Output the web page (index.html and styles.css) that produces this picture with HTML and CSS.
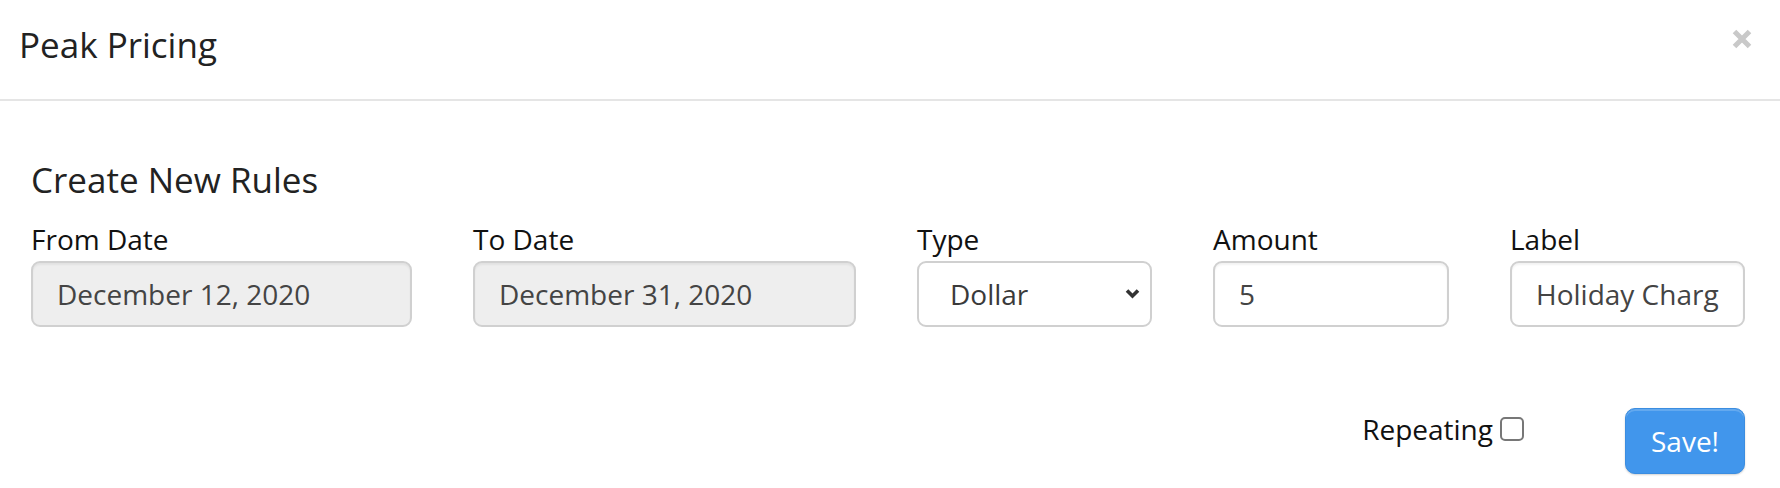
FILE: index.html
```html
<!DOCTYPE html>
<html lang="en">
<head>
<meta charset="utf-8">
<title>Peak Pricing</title>
<link rel="stylesheet" href="styles.css">
</head>
<body>
<div class="modal">
  <div class="modal-header">
    <h3 class="modal-title">Peak Pricing</h3>
    <button class="close" type="button" aria-label="Close">
      <svg width="20" height="20" viewBox="0 0 20 20"><path d="M2.5 2.5 L17.5 17.5 M17.5 2.5 L2.5 17.5" stroke="#c9c9c9" stroke-width="5" fill="none"/></svg>
    </button>
  </div>
  <div class="modal-body">
    <h4 class="section-title">Create New Rules</h4>
    <div class="form-row">
      <div class="field">
        <label class="field-label">From Date</label>
        <input class="control control-readonly" type="text" value="December 12, 2020" readonly>
      </div>
      <div class="field">
        <label class="field-label">To Date</label>
        <input class="control control-readonly" type="text" value="December 31, 2020" readonly>
      </div>
      <div class="field">
        <label class="field-label">Type</label>
        <div class="select-wrap">
          <select class="control control-select">
            <option>Dollar</option>
            <option>Percent</option>
          </select>
          <svg class="chevron" width="15" height="11" viewBox="0 0 15 11"><path d="M2 2.5 L7.5 8 L13 2.5" stroke="#333" stroke-width="3.6" fill="none"/></svg>
        </div>
      </div>
      <div class="field">
        <label class="field-label">Amount</label>
        <input class="control" type="text" value="5">
      </div>
      <div class="field">
        <label class="field-label">Label</label>
        <input class="control" type="text" value="Holiday Charge">
      </div>
    </div>
    <div class="form-footer">
      <label class="repeat">Repeating <input class="checkbox" type="checkbox"></label>
      <button class="btn-save" type="button">Save!</button>
    </div>
  </div>
</div>
</body>
</html>
```
FILE: styles.css
```css
html, body {
  margin: 0;
  padding: 0;
  background: #ffffff;
}
body {
  font-family: "Open Sans", "Liberation Sans", sans-serif;
  color: #222;
  width: 1780px;
  height: 488px;
  overflow: hidden;
}
.modal-header {
  box-sizing: border-box;
  height: 101px;
  padding: 21px 28px 0 19px;
  border-bottom: 2px solid #e5e5e5;
  display: flex;
  justify-content: space-between;
  align-items: flex-start;
}
.modal-title {
  margin: 0;
  font-size: 35px;
  font-weight: 400;
  line-height: 48px;
  color: #222;
}
.close {
  margin-top: 8px;
  padding: 0;
  border: 0;
  background: transparent;
  width: 20px;
  height: 20px;
  display: block;
}
.close svg { display: block; }
.modal-body {
  padding: 59px 35px 0 31px;
}
.section-title {
  margin: 0;
  font-size: 35px;
  font-weight: 400;
  line-height: 40px;
  color: #222;
}
.form-row {
  margin-top: 19px;
  display: grid;
  grid-template-columns: 381fr 383fr 235fr 236fr 235fr;
  column-gap: 61px;
}
.field {
  min-width: 0;
}
.field-label {
  display: block;
  font-size: 28px;
  line-height: 40px;
  margin-bottom: 2px;
  color: #111;
}
.control {
  box-sizing: border-box;
  display: block;
  width: 100%;
  height: 66px;
  margin: 0;
  padding: 0 24px;
  font-family: "Open Sans", "Liberation Sans", sans-serif;
  font-size: 28px;
  color: #444;
  background: #fff;
  border: 2px solid #d0d0d0;
  border-radius: 9px;
  box-shadow: inset 0 2px 2px rgba(0,0,0,0.05);
  outline: none;
}
.control-readonly {
  background: #eeeeee;
}
.select-wrap {
  position: relative;
}
.control-select {
  -webkit-appearance: none;
  appearance: none;
  padding-left: 31px;
  color: #3a3a3a;
  box-shadow: none;
}
.chevron {
  position: absolute;
  right: 12px;
  top: 27px;
  pointer-events: none;
}
.form-footer {
  margin-top: 81px;
  display: flex;
  justify-content: flex-end;
  align-items: flex-start;
}
.repeat {
  display: flex;
  align-items: flex-start;
  gap: 7px;
  margin-top: 1px;
  font-family: "Open Sans", "Liberation Sans", sans-serif;
  font-size: 28px;
  line-height: 40px;
  color: #111;
}
.checkbox {
  -webkit-appearance: none;
  appearance: none;
  box-sizing: border-box;
  width: 24px;
  height: 24px;
  margin: 8px 0 0 0;
  border: 2px solid #777;
  border-radius: 5px;
  background: #fff;
}
.btn-save {
  box-sizing: border-box;
  margin-left: 101px;
  width: 120px;
  height: 66px;
  padding: 0;
  font-family: "Open Sans", "Liberation Sans", sans-serif;
  font-size: 28px;
  color: #fff;
  background: #4196ec;
  border: 1px solid #3b8de0;
  border-radius: 10px;
  box-shadow: inset 0 2px 0 rgba(255,255,255,0.18), 0 1px 2px rgba(0,0,0,0.18);
}
```
